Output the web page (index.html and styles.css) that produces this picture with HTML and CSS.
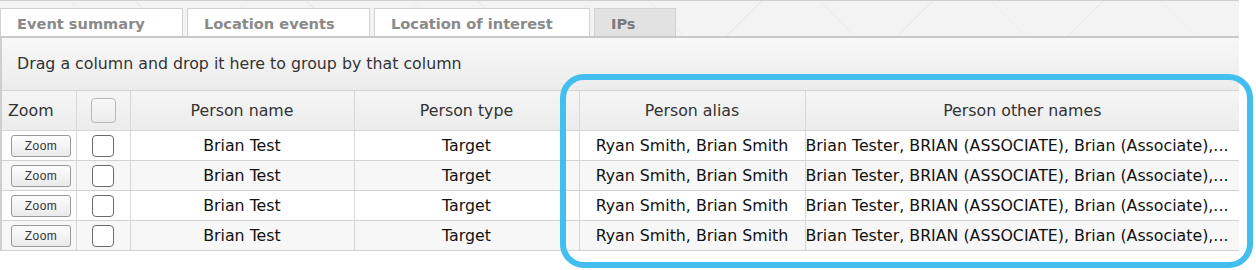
FILE: index.html
```html
<!DOCTYPE html>
<html lang="en">

<head>
    <meta charset="UTF-8">
    <title>IPs</title>
    <link rel="stylesheet" href="styles.css">
</head>

<body>
    <div class="panel">
        <div class="tabstrip">
            <div class="tab">Event summary</div>
            <div class="tab">Location events</div>
            <div class="tab tab-loi">Location of interest</div>
            <div class="tab active">IPs</div>
        </div>

        <div class="grid">
            <div class="group-bar">Drag a column and drop it here to group by that column</div>
            <table class="rows">
                <colgroup>
                    <col class="c-zoom">
                    <col class="c-check">
                    <col class="c-name">
                    <col class="c-type">
                    <col class="c-alias">
                    <col>
                </colgroup>
                <thead>
                    <tr>
                        <th class="left">Zoom</th>
                        <th><span class="check head"></span></th>
                        <th>Person name</th>
                        <th>Person type</th>
                        <th>Person alias</th>
                        <th>Person other names</th>
                    </tr>
                </thead>
                <tbody>
                    <tr>
                        <td><button class="zoom-btn">Zoom</button></td>
                        <td><span class="check"></span></td>
                        <td>Brian Test</td>
                        <td>Target</td>
                        <td>Ryan Smith, Brian Smith</td>
                        <td class="clip">Brian Tester, BRIAN (ASSOCIATE), Brian (Associate),...</td>
                    </tr>
                    <tr class="alt">
                        <td><button class="zoom-btn">Zoom</button></td>
                        <td><span class="check"></span></td>
                        <td>Brian Test</td>
                        <td>Target</td>
                        <td>Ryan Smith, Brian Smith</td>
                        <td class="clip">Brian Tester, BRIAN (ASSOCIATE), Brian (Associate),...</td>
                    </tr>
                    <tr>
                        <td><button class="zoom-btn">Zoom</button></td>
                        <td><span class="check"></span></td>
                        <td>Brian Test</td>
                        <td>Target</td>
                        <td>Ryan Smith, Brian Smith</td>
                        <td class="clip">Brian Tester, BRIAN (ASSOCIATE), Brian (Associate),...</td>
                    </tr>
                    <tr class="alt">
                        <td><button class="zoom-btn">Zoom</button></td>
                        <td><span class="check"></span></td>
                        <td>Brian Test</td>
                        <td>Target</td>
                        <td>Ryan Smith, Brian Smith</td>
                        <td class="clip">Brian Tester, BRIAN (ASSOCIATE), Brian (Associate),...</td>
                    </tr>
                </tbody>
            </table>
        </div>

        <div class="highlight"></div>
    </div>
</body>

</html>
```

FILE: styles.css
```css
body {
    margin: 0;
    min-height: 270px;
    background-color: #fff;
    font-family: "DejaVu Sans", sans-serif;
    color: #222;
}

.panel {
    width: 1239px;
    position: relative;
}

.tabstrip {
    height: 35px;
    display: flex;
    gap: 4px;
    align-items: flex-end;
    border-top: 1px solid #cfcfcf;
    border-bottom: 2px solid #c9c9c9;
    background-color: #f3f3f3;
    background-image:
        repeating-linear-gradient(45deg, transparent 0 120px, #ebebeb 120px 121px),
        repeating-linear-gradient(-45deg, transparent 0 120px, #ebebeb 120px 121px);
}

.tab {
    width: 165px;
    height: 27px;
    padding-left: 16px;
    line-height: 29px;
    font-size: 14.6px;
    font-weight: bold;
    color: #8a8a8a;
    background-color: #fff;
    border: 1px solid #d2d2d2;
    border-bottom: none;
    white-space: nowrap;
}

.tab-loi {
    width: 198px;
}

.tab.active {
    width: 64px;
    background-color: #e2e2e2;
    color: #7a7a7a;
}

.grid {
    border-left: 2px solid #cfcfcf;
}

.group-bar {
    height: 52px;
    padding-left: 15px;
    line-height: 52px;
    font-size: 15.8px;
    color: #333;
    background: linear-gradient(#f8f8f8, #ececec);
    border-bottom: 1px solid #d4d4d4;
}

.rows {
    width: 100%;
    border-collapse: collapse;
    table-layout: fixed;
    font-size: 15.8px;
}

.c-zoom { width: 74px; }
.c-check { width: 54px; }
.c-name { width: 224px; }
.c-type { width: 225px; }
.c-alias { width: 226px; }

.rows th {
    height: 39px;
    font-weight: normal;
    color: #333;
    background: linear-gradient(#f5f5f5, #ececec);
    border-left: 1px solid #d8d8d8;
    border-bottom: 1px solid #d4d4d4;
    padding: 0;
}

.rows th:first-child,
.rows td:first-child {
    border-left: none;
}

.rows th.left {
    text-align: left;
    padding-left: 6px;
}

.rows td {
    height: 29px;
    padding: 0;
    text-align: center;
    border-left: 1px solid #d8d8d8;
    border-bottom: 1px solid #d2d2d2;
    white-space: nowrap;
    color: #111;
}

.rows td.clip {
    text-align: left;
    overflow: hidden;
}

.rows tr.alt td {
    background-color: #f7f7f7;
}

.zoom-btn {
    width: 60px;
    height: 22px;
    padding: 0;
    font-family: "Liberation Sans", sans-serif;
    font-size: 12px;
    letter-spacing: 0.5px;
    color: #333;
    background: linear-gradient(#fdfdfd, #eaeaea);
    border: 1px solid #9a9a9a;
    border-radius: 3px;
    display: block;
    margin-left: 9px;
}

.check {
    display: block;
    width: 20px;
    height: 20px;
    margin: 0 auto;
    border: 1px solid #6a6a6a;
    border-radius: 4px;
    background-color: #fff;
}

.check.head {
    width: 23px;
    height: 23px;
    border-color: #b8b8b8;
    background: linear-gradient(#f8f8f8, #ececec);
}

.highlight {
    position: absolute;
    left: 560px;
    top: 74px;
    width: 681px;
    height: 182px;
    border: 6px solid #42bfee;
    border-radius: 24px;
    pointer-events: none;
}
```
